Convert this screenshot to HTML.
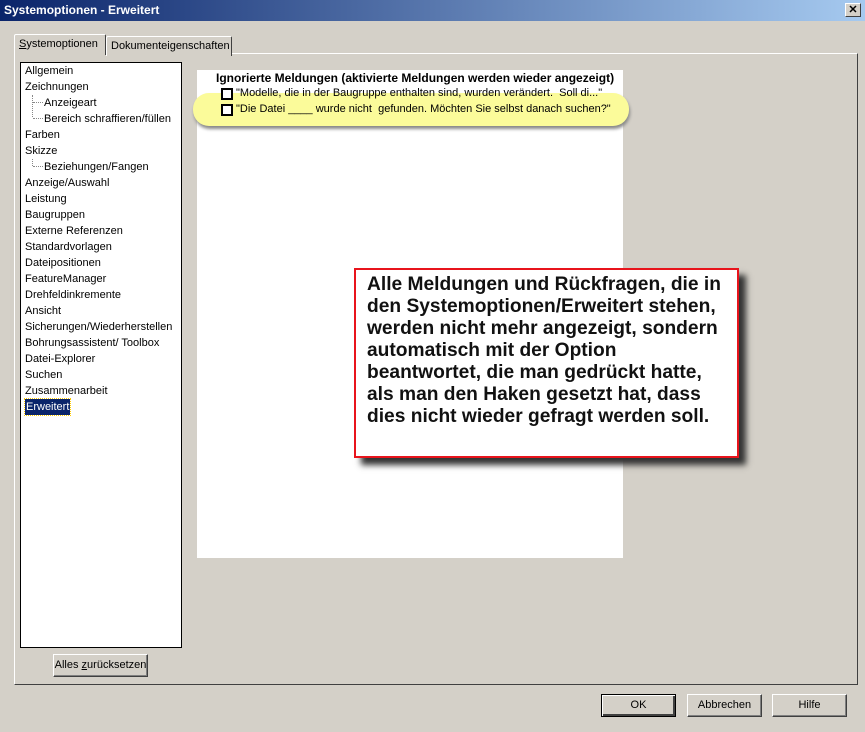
<!DOCTYPE html>
<html><head><meta charset="utf-8"><style>
*{box-sizing:border-box;margin:0;padding:0}
body{width:865px;height:732px;background:#d4d0c8;font-family:"Liberation Sans",sans-serif;font-size:11px;position:relative;overflow:hidden;color:#000}
.abs{position:absolute}
.title{left:0;top:0;width:865px;height:21px;background:linear-gradient(to right,#0a246a,#a6caf0);color:#fff;font-weight:bold;font-size:12px;line-height:21px;padding-left:4px}
.close{left:845px;top:3px;width:16px;height:14px;background:#d4d0c8;border:1px solid;border-color:#fff #404040 #404040 #fff;font-size:11px;font-weight:bold;line-height:12px;text-align:center;color:#000}
.panel{left:14px;top:53px;width:844px;height:632px;border:1px solid;border-color:#fff #404040 #404040 #fff}
.tab{height:20px;border:1px solid;border-bottom:none;border-color:#fff #404040 #404040 #fff;background:#d4d0c8;line-height:18px;padding:0 4px;border-radius:2px 2px 0 0}
.tree{left:20px;top:62px;width:162px;height:586px;background:#fff;border:1px solid #000}
.tree div{position:absolute;white-space:nowrap;line-height:16px}
.btn{background:#d4d0c8;border:1px solid;border-color:#fff #404040 #404040 #fff;box-shadow:inset -1px -1px #808080;text-align:center;line-height:21px}
.white{left:197px;top:70px;width:426px;height:488px;background:#fff}
.cb{position:absolute;width:12px;height:12px;border:2px solid #000;background:#fff}
.call{left:354px;top:268px;width:385px;height:190px;background:#fff;border:2px solid #e8141c;box-shadow:7px 7px 6px #333;font-weight:bold;font-size:19.2px;line-height:22px;padding:4px 0 0 11px;color:#111;white-space:nowrap}
</style></head><body>
<div class="abs title">Systemoptionen - Erweitert</div>
<div class="abs close">✕</div>
<div class="abs panel"></div>
<div class="abs tab" style="left:106px;top:36px;width:126px">Dokumenteigenschaften</div>
<div class="abs tab" style="left:14px;top:34px;width:92px;height:21px;border-bottom:none"><span style="text-decoration:underline">S</span>ystemoptionen</div>
<div class="abs tree">
<div style="left:4px;top:0">Allgemein</div>
<div style="left:4px;top:16px">Zeichnungen</div>
<div style="left:11px;top:32px;width:1px;height:22px;border-left:1px dotted #888"></div>
<div style="left:12px;top:39px;width:10px;border-top:1px dotted #888"></div>
<div style="left:12px;top:55px;width:10px;border-top:1px dotted #888"></div>
<div style="left:23px;top:32px">Anzeigeart</div>
<div style="left:23px;top:48px">Bereich schraffieren/füllen</div>
<div style="left:4px;top:64px">Farben</div>
<div style="left:4px;top:80px">Skizze</div>
<div style="left:11px;top:96px;width:1px;height:7px;border-left:1px dotted #888"></div>
<div style="left:12px;top:103px;width:10px;border-top:1px dotted #888"></div>
<div style="left:23px;top:96px">Beziehungen/Fangen</div>
<div style="left:4px;top:112px">Anzeige/Auswahl</div>
<div style="left:4px;top:128px">Leistung</div>
<div style="left:4px;top:144px">Baugruppen</div>
<div style="left:4px;top:160px">Externe Referenzen</div>
<div style="left:4px;top:176px">Standardvorlagen</div>
<div style="left:4px;top:192px">Dateipositionen</div>
<div style="left:4px;top:208px">FeatureManager</div>
<div style="left:4px;top:224px">Drehfeldinkremente</div>
<div style="left:4px;top:240px">Ansicht</div>
<div style="left:4px;top:256px">Sicherungen/Wiederherstellen</div>
<div style="left:4px;top:272px">Bohrungsassistent/ Toolbox</div>
<div style="left:4px;top:288px">Datei-Explorer</div>
<div style="left:4px;top:304px">Suchen</div>
<div style="left:4px;top:320px">Zusammenarbeit</div>
<div style="left:4px;top:336px;background:#0a246a;color:#fff;padding:0 1px;outline:1px dotted #fc0">Erweitert</div>
</div>
<div class="abs btn" style="left:53px;top:654px;width:95px;height:23px">Alles <u>z</u>urücksetzen</div>
<div class="abs white"></div>
<div class="abs" style="left:193px;top:93px;width:436px;height:33px;background:#fbfb9a;border-radius:16px;box-shadow:1px 3px 3px #888"></div>
<div class="abs" style="left:216px;top:71px;font-weight:bold;font-size:12px">Ignorierte Meldungen (aktivierte Meldungen werden wieder angezeigt)</div>
<div class="cb" style="left:221px;top:88px"></div>
<div class="abs" style="left:236px;top:87px">"Modelle, die in der Baugruppe enthalten sind, wurden verändert.&nbsp; Soll di..."</div>
<div class="cb" style="left:221px;top:104px"></div>
<div class="abs" style="left:236px;top:103px">"Die Datei ____ wurde nicht&nbsp; gefunden. Möchten Sie selbst danach suchen?"</div>
<div class="abs call">Alle Meldungen und Rückfragen, die in<br>den Systemoptionen/Erweitert stehen,<br>werden nicht mehr angezeigt, sondern<br>automatisch mit der Option<br>beantwortet, die man gedrückt hatte,<br>als man den Haken gesetzt hat, dass<br>dies nicht wieder gefragt werden soll.</div>
<div class="abs btn" style="left:601px;top:694px;width:75px;height:23px;border:1px solid #000;box-shadow:inset 1px 1px #fff,inset -2px -2px #404040">OK</div>
<div class="abs btn" style="left:687px;top:694px;width:75px;height:23px">Abbrechen</div>
<div class="abs btn" style="left:772px;top:694px;width:75px;height:23px">Hilfe</div>
</body></html>
